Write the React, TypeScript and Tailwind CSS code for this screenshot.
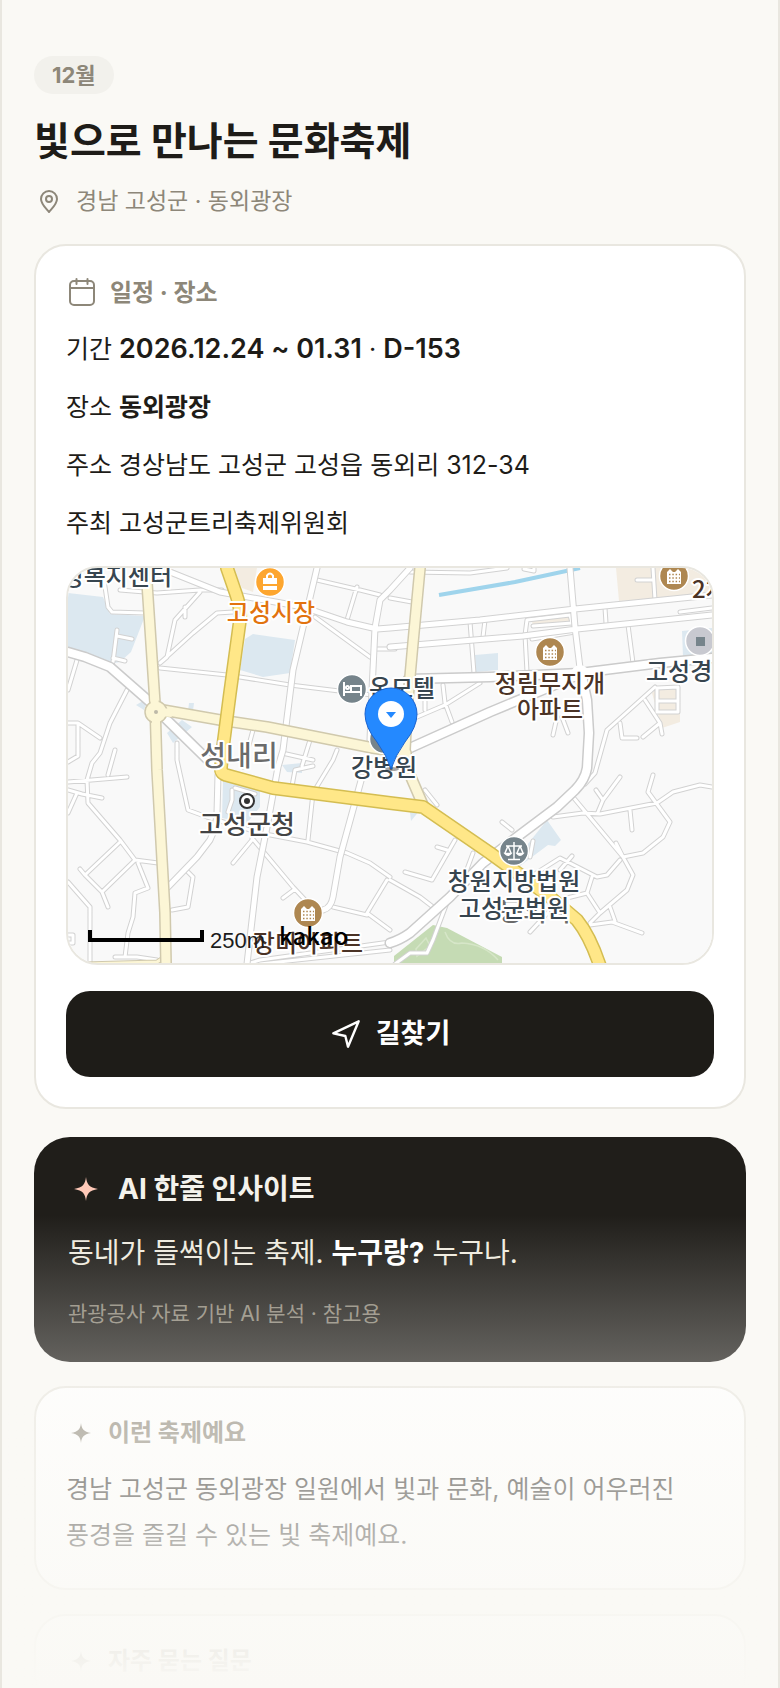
import type { ReactNode } from 'react';

interface MapLabel {
  text: string;
  x: number;
  y: number;
  size: number;
  color: string;
  anchor?: 'start' | 'middle' | 'end';
}

// Narrow streets
const ALLEYS = [
  'M60 30L97 33L140 30L162 30M140 32L115 60L107 97L100 103L133 73L157 53L173 52M125 47V57',
  'M44 20L48 47L52 52L85 53M57 70L53 102M57 76L72 79M53 98L65 101',
  'M100 108L167 115L230 125L312 135M297 27L287 60M257 20L300 30L320 35M255 57L310 97M317 89H335',
  'M17 100L8 130M67 130L50 163L40 193L32 203L27 220L28 243L60 280L75 300L98 303M8 163H18L40 178M8 202L18 196V165M55 190L48 215',
  'M8 222L67 217M8 230L22 234L42 238M17 233L8 253M60 282L25 315L42 332L75 300M42 332L48 347M25 315L20 309',
  'M78 303L88 328L75 333L73 357L68 373L65 397M55 397H77L97 400M8 322L30 347V404M8 375H13V383H8',
  'M128 312L133 317L128 347L112 350M117 183V200L128 250L147 257L200 273L247 282L287 293L310 303L330 317M327 320L307 353L330 370M273 347L307 355',
  'M192 278L233 327L248 343M235 329L223 338M192 280L173 303M277 190L273 200L253 233L248 280M193 170L183 207M222 193L253 200M232 226L235 210L253 206M250 180L242 206',
  'M187 404L200 400L330 382M200 404L330 390M425 60L423 77M410 62L414 113M465 75L467 112M465 75L467 60L510 55L512 63L473 66M472 79L515 72',
  'M545 48L546 63M568 65L573 103M593 8L595 40M577 20H593M620 52L652 48M350 12L410 13L447 8M330 38L352 42M464 9L474 11V8',
  'M383 125L385 143L392 162M350 160L385 145L420 123M365 150V135M560 163L562 178H577M585 140L600 163L583 177M600 163L602 174',
  'M597 128L618 127V152H597ZM597 141H618M497 157L493 175M502 157L508 173',
  'M493 257L523 253L540 254L597 243L613 232L640 225L652 227M513 237L563 297M593 215L588 232L610 262L603 277L583 293L563 297L556 283M570 250L572 270M538 252L543 240L560 217M536 230L543 240',
  'M563 297L573 315L567 330L540 353L530 363M473 315L500 298L537 317L547 315L560 300M512 296L500 310M532 317L527 333L540 353M507 338L527 333M530 365L552 362L582 373M550 347L555 361M470 372L497 343',
  'M395 280L372 320L345 312M377 287L387 290M330 320L360 337L373 347M442 262L452 270M413 293L403 320M365 230L377 245M388 340L373 380L367 393H350L335 404M473 281L470 297',
  'M172 230V240L168 252M175 228L195 234M595 127L547 170L535 213L525 224',
];

// Two lane streets
const STREETS = [
  'M110 12L160 32L243 47L287 62L317 69L330 68L420 60L515 49L652 35',
  'M330 87L463 76L517 69L652 55',
  'M312 130L315 68L320 40L330 30L350 8M312 130L310 180',
  'M257 8L233 110L223 190L218 207L207 267L197 317L187 404',
  'M510 8L515 67L520 108',
  'M302 217L280 297L273 337Q271 348 263 350',
  'M158 215L157 253Q156 268 150 280L137 297L108 327',
];

const AVENUES = [
  'M8 92L25 97L50 107L90 142M105 158L152 204',
  'M348 119L430 117L520 113L600 103L652 98',
  'M350 188L430 152L490 127L520 114',
  'M521 112L527 140L529 173L527 208Q525 220 515 230L497 247L457 277L423 303L390 337L350 373Q340 380 330 383',
];

const MINOR_ROUTES = [
  'M86 8L95 143L97 210L105 353L106 404',
  'M103 150L160 160L207 167L313 188L346 193',
  'M360 8L353 83L347 150L345 190L350 215L363 245',
];

const MAIN_ROUTE =
  'M167 8L176 34Q181 48 180 60L170 133L163 187L161 207Q160 213 166 215L213 228L330 243L363 247L430 293L463 317L490 337L517 360Q530 376 540 406';

const LABELS: MapLabel[] = [
  { text: '행정복지센터', x: 112, y: 25, size: 24, color: '#37454f', anchor: 'end' },
  { text: '고성시장', x: 211, y: 61, size: 24, color: '#e2730f' },
  { text: '2차', x: 632, y: 38, size: 24, color: '#4b3326', anchor: 'start' },
  { text: '정림무지개', x: 490, y: 132, size: 24, color: '#4b3326' },
  { text: '아파트', x: 490, y: 158, size: 24, color: '#4b3326' },
  { text: '고성경', x: 586, y: 120, size: 24, color: '#37454f', anchor: 'start' },
  { text: '온모텔', x: 342, y: 137, size: 24, color: '#37454f' },
  { text: '강병원', x: 324, y: 216, size: 24, color: '#37454f' },
  { text: '성내리', x: 179, y: 206, size: 28, color: '#6b6b6b' },
  { text: '고성군청', x: 187, y: 274, size: 26, color: '#444444' },
  { text: '장미아파트', x: 248, y: 392, size: 24, color: '#4b3326' },
  { text: '동외리', x: 475, y: 361, size: 26, color: '#6b6b6b' },
  { text: '창원지방법원', x: 454, y: 330, size: 24, color: '#37454f' },
  { text: '고성군법원', x: 454, y: 357, size: 24, color: '#37454f' },
];

const APARTMENTS = [
  { x: 490, y: 92 },
  { x: 614, y: 16 },
  { x: 248, y: 353 },
];

function Roads({ paths, width, casing, fill, edge = 2 }: { paths: string[]; width: number; casing: string; fill: string; edge?: number }) {
  const d = paths.join('');
  return (
    <g fill="none" strokeLinejoin="round" strokeLinecap="round">
      <path d={d} stroke={casing} strokeWidth={width + edge} />
      <path d={d} stroke={fill} strokeWidth={width} />
    </g>
  );
}

function FestivalMap() {
  return (
    <svg viewBox="8 8 644 395" className="block w-full bg-[#f9f9f9]" role="img" aria-label="동외광장 지도">
      {/* Blocks */}
      <g fill="#dce8f0">
        <path d="M8 33L43 37L50 54L85 56L71 92L60 102L48 104L24 95L8 87Z" />
        <path d="M185 79L193 74L235 80L230 113L203 117L180 110Z" />
        <path d="M107 173L122 160L132 167L113 183ZM129 143H134L133 151H128ZM76 145L88 138L84 150Z" />
        <path d="M163 220L200 230V247L187 263L162 258ZM222 205L242 203V213L227 212ZM350 252L360 250L351 261Z" />
        <path d="M455 300L487 260L501 280L495 286L488 285L460 306Z" />
        <path d="M415 95L438 93V110L416 112ZM622 71L652 68V97H623Z" />
      </g>
      <g fill="#f3ece1">
        <path d="M556 8H652V37L559 41ZM592 133L598 127L620 125V162L602 168ZM472 61L512 54V63L473 67ZM172 8H197L193 32L182 28Z" />
      </g>
      <path d="M334 396L373 365L387 368L442 397V404H334Z" fill="#c5dbb4" />
      <path d="M356 389L366 378L370 386L357 396ZM385 372Q390 386 402 383Q424 384 438 400" fill="none" stroke="#d6e6c8" strokeWidth="1.5" />
      <path d="M379 35L455 22L520 8" fill="none" stroke="#9fd4ec" strokeWidth="4" />

      <Roads paths={ALLEYS} width={3} casing="#d2d2d2" fill="#ffffff" />
      <Roads paths={STREETS} width={5} casing="#d2d2d2" fill="#ffffff" />
      <Roads paths={AVENUES} width={8} casing="#cbcbcb" fill="#ffffff" edge={3} />
      <circle cx="520" cy="114" r="9" fill="#ffffff" />
      <Roads paths={['M24 404L97 402L106 396']} width={3} casing="#d0c9ad" fill="#fcf6d6" />
      <Roads paths={MINOR_ROUTES} width={9} casing="#d0c9ad" fill="#fcf6d6" edge={3} />
      <circle cx="96" cy="152" r="11" fill="#fcf6d6" stroke="#d0c9ad" strokeWidth="1.5" />
      <path d="M94 135L95 146M100 152L112 153M96 158V170" stroke="#fcf6d6" strokeWidth="8" />
      <circle cx="96" cy="152" r="2" fill="#bdb9a8" />
      <Roads paths={[MAIN_ROUTE]} width={11} casing="#d4bd52" fill="#ffe788" edge={3} />

      {/* Place markers */}
      <g stroke="#ffffff" strokeWidth="1.5">
        <circle cx="210" cy="22" r="14.5" fill="#fda62f" />
        <circle cx="292" cy="129" r="14.5" fill="#76848b" />
        <circle cx="324" cy="179" r="14.5" fill="#76848b" />
        <circle cx="454" cy="291" r="14.5" fill="#76848b" />
        <circle cx="640" cy="81" r="14.5" fill="#c8c9d0" />
        {APARTMENTS.map((spot) => (
          <circle key={spot.x} cx={spot.x} cy={spot.y} r="14.5" fill="#ae8751" />
        ))}
      </g>
      <path d="M203 18H217V24H203ZM203 26H217V30H203Z" fill="#ffffff" />
      <path d="M207 18V15.500Q210 11.500 213 15.500V18" fill="none" stroke="#ffffff" strokeWidth="2" />
      <g fill="none" stroke="#ffffff" strokeWidth="2">
        <path d="M284 122V136M284 132H301M301 136V126H291V132" />
        <circle cx="287.500" cy="127.500" r="1.500" />
      </g>
      <g fill="none" stroke="#ffffff" strokeWidth="1.500">
        <path d="M454 282V299M448 299.500H460M446 286H462M448 286L445 293M448 286L451 293M460 286L457 293M460 286L463 293" />
        <path d="M445 293.500H451Q448 297 445 293.500ZM457 293.500H463Q460 297 457 293.500Z" fill="#ffffff" />
      </g>
      <path d="M636 77H645V86H636Z" fill="#76848b" />
      {APARTMENTS.map((spot) => (
        <g key={spot.x} transform={`translate(${spot.x} ${spot.y})`}>
          <path d="M-7 8V-4L-4 -7L-1 -4H1L4 -7L7 -4V8Z" fill="#ffffff" />
          <path d="M-5 -1.500H6M-5 2H6M-5 5.500H6" stroke="#ae8751" strokeWidth="1.500" strokeDasharray="1.500 1.800" />
        </g>
      ))}
      <circle cx="187" cy="241" r="7" fill="#ffffff" stroke="#333333" strokeWidth="2" />
      <circle cx="187" cy="241" r="3" fill="#333333" />

      <g fontFamily="'Noto Sans CJK KR', sans-serif" fontWeight="500" stroke="#ffffff" strokeWidth="4" strokeLinejoin="round" paintOrder="stroke">
        {LABELS.map((label) => (
          <text key={label.text} x={label.x} y={label.y} fontSize={label.size} fill={label.color} textAnchor={label.anchor ?? 'middle'}>
            {label.text}
          </text>
        ))}
      </g>

      {/* Selected venue */}
      <ellipse cx="332" cy="209" rx="7" ry="2" fill="#000000" opacity="0.35" />
      <path
        d="M331 209Q327 196 317 182Q305 167 305 154A26 26 0 0 1 357 154Q357 167 345 182Q335 196 331 209Z"
        fill="#2489ff"
        stroke="#1a63d0"
        strokeWidth="1"
      />
      <circle cx="331" cy="154" r="13" fill="#ffffff" />
      <path d="M326 152H336L331 158Z" fill="#2489ff" />

      {/* Scale bar */}
      <path d="M30 370V380H142V370" fill="none" stroke="#000000" strokeWidth="4" />
      <text x="150" y="388" fontFamily="'Liberation Sans', sans-serif" fontSize="22" fill="#1c1c1c">
        250m
      </text>
      <text x="219" y="385" fontFamily="'Noto Sans CJK KR', sans-serif" fontSize="24" fontWeight="500" fill="#000000">
        kakao
      </text>
    </svg>
  );
}

function SparkIcon({ className }: { className: string }) {
  return (
    <svg viewBox="0 0 24 24" className={className} fill="currentColor" aria-hidden="true">
      <path d="M12 4C12.600 9 14 10.800 20 12C14 13.200 12.600 15 12 20C11.400 15 10 13.200 4 12C10 10.800 11.400 9 12 4Z" />
    </svg>
  );
}

function Card({ title, children }: { title: string; children?: ReactNode }) {
  return (
    <section className="mt-6 rounded-[32px] border-2 border-[#e9e7e0] bg-white p-[30px]">
      <h2 className="flex items-center gap-3 text-[24px] leading-[30px] font-bold text-[#8d8779]">
        <SparkIcon className="size-[30px] shrink-0" />
        {title}
      </h2>
      {children}
    </section>
  );
}

export default function App() {
  return (
    <main
      lang="ko"
      className="relative h-screen overflow-hidden border-x-2 border-[#e9e7e0] bg-[#faf9f5] px-8 pt-14 font-[Inter,'Noto_Sans_CJK_KR',sans-serif] break-keep text-[#1e1c18]"
    >
      <header>
        <p className="flex h-[38px] w-fit items-center rounded-full bg-[#f2f1ec] px-[18px] text-[22px] font-bold text-[#8d8779]">12월</p>
        <h1 className="mt-6 text-[39px] leading-[46px] font-bold">빛으로 만나는 문화축제</h1>
        <p className="mt-5 flex items-center gap-3 text-[23px] leading-[34px] text-[#8d8779]">
          <svg viewBox="0 0 30 30" className="size-[30px] shrink-0" fill="none" stroke="currentColor" strokeWidth="2" aria-hidden="true">
            <path d="M15 26C12 22.500 7 18 7 13A8 8 0 0 1 23 13C23 18 18 22.500 15 26Z" strokeLinejoin="round" />
            <circle cx="15" cy="13" r="3" />
          </svg>
          경남 고성군 · 동외광장
        </p>
      </header>

      {/* Schedule and venue */}
      <section className="mt-[26px] rounded-[32px] border-2 border-[#e9e7e0] bg-white p-[30px]">
        <h2 className="flex items-center gap-3 text-[24px] leading-[34px] font-bold text-[#8d8779]">
          <svg viewBox="0 0 32 32" className="size-8 shrink-0" fill="none" stroke="currentColor" strokeWidth="2" strokeLinecap="round" aria-hidden="true">
            <rect x="4" y="4" width="24" height="24" rx="4" />
            <path d="M4 11H28M10.500 2V7M21.500 2V7" />
          </svg>
          일정 · 장소
        </h2>
        <div className="mt-[18px] flex flex-col gap-4 text-[25px] leading-[42px]">
          <p>
            기간 <strong className="text-[27px] font-semibold">2026.12.24 ~ 01.31</strong> · <strong className="text-[27px] font-semibold">D-153</strong>
          </p>
          <p>
            장소 <strong className="font-bold">동외광장</strong>
          </p>
          <p>주소 경상남도 고성군 고성읍 동외리 312-34</p>
          <p>주최 고성군트리축제위원회</p>
        </div>
        <div className="mt-[22px] overflow-hidden rounded-[32px] border-2 border-[#e9e7e0]">
          <FestivalMap />
        </div>
        <button type="button" className="mt-[26px] flex h-[86px] w-full items-center justify-center gap-[14px] rounded-3xl bg-[#1e1c18] text-[27px] font-bold text-white">
          <svg viewBox="0 0 24 24" className="size-8" fill="none" stroke="currentColor" strokeWidth="1.800" strokeLinejoin="round" aria-hidden="true">
            <path d="M2.500 11.500L21.500 2.500L13.500 21.500L11.500 13.500Z" />
          </svg>
          길찾기
        </button>
      </section>

      {/* AI insight */}
      <section className="mt-7 rounded-[36px] bg-[#201e1a] p-[34px]">
        <h2 className="flex items-center gap-[14px] text-[28px] leading-[34px] font-bold text-[#f4f2ec]">
          <SparkIcon className="size-9 shrink-0 text-[#ffc9b8]" />
          AI 한줄 인사이트
        </h2>
        <p className="mt-6 text-[28px] leading-[44px] text-[#efebdf]">
          동네가 들썩이는 축제. <strong className="font-bold text-white">누구랑?</strong> 누구나.
        </p>
        <p className="mt-6 text-[21px] leading-[29px] text-[#8d8779]">관광공사 자료 기반 AI 분석 · 참고용</p>
      </section>

      <Card title="이런 축제예요">
        <p className="mt-[18px] text-[25px] leading-[46px]">경남 고성군 동외광장 일원에서 빛과 문화, 예술이 어우러진 풍경을 즐길 수 있는 빛 축제예요.</p>
      </Card>
      <Card title="자주 묻는 질문" />

      {/* Bottom fade */}
      <div className="pointer-events-none absolute -inset-x-0.5 bottom-0 h-[28%] bg-linear-to-b from-[#faf9f5]/0 to-[#faf9f5]" />
    </main>
  );
}
